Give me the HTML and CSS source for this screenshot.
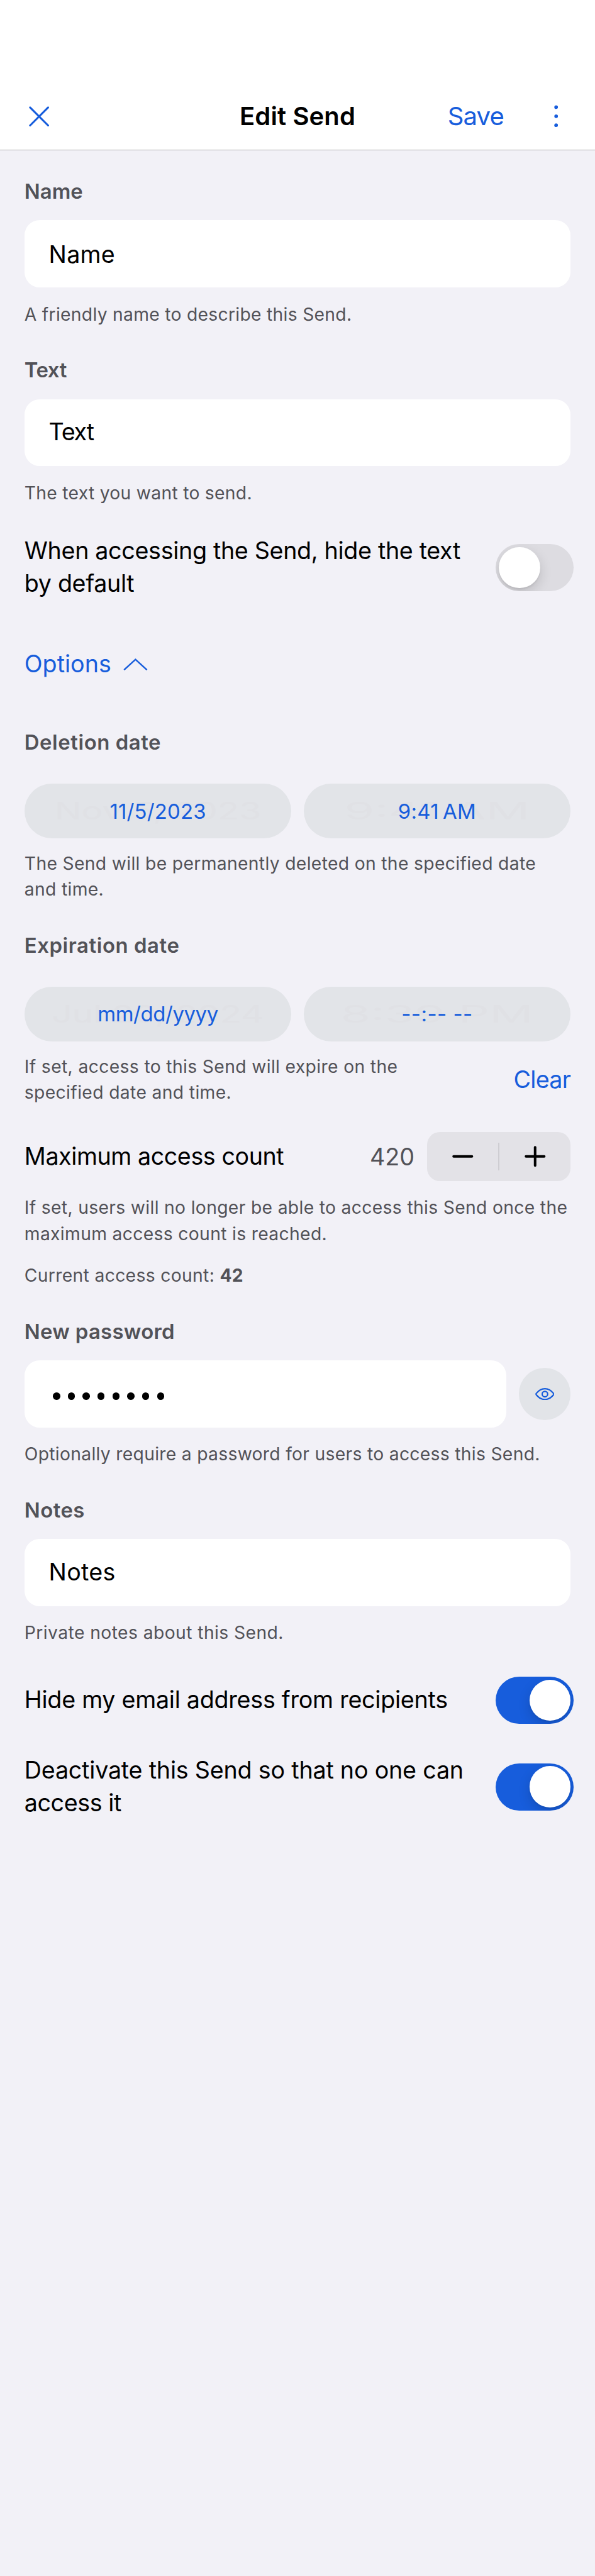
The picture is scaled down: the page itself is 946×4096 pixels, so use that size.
FILE: index.html
```html
<!DOCTYPE html>
<html lang="en">
<head>
<meta charset="utf-8">
<title>Edit Send</title>
<link rel="stylesheet" href="styles.css">
</head>
<body>
<header class="navbar">
  <svg class="icon-close" viewBox="0 0 40 40"><path d="M2.300 2.300 37.700 37.700M37.700 2.300 2.300 37.700"/></svg>
  <h1 class="title">Edit Send</h1>
  <div class="actions">
    <span class="save">Save</span>
    <svg class="icon-more" viewBox="0 0 8 44"><circle cx="4" cy="4.200" r="3.600"/><circle cx="4" cy="22" r="3.600"/><circle cx="4" cy="39.800" r="3.600"/></svg>
  </div>
</header>
<main class="form">
  <section class="group top">
    <h2 class="label l-name">Name</h2>
    <div class="field"><span class="t-name">Name</span></div>
    <p class="help h-name">A friendly name to describe this Send.</p>
  </section>
  <section class="group">
    <h2 class="label l-text">Text</h2>
    <div class="field area"><span class="t-text">Text</span></div>
    <p class="help h-name">The text you want to send.</p>
  </section>
  <section class="row first">
    <p class="body">When accessing the Send, hide the text<br>by default</p>
    <span class="switch"><i class="thumb"></i></span>
  </section>
  <div class="options">
    <span>Options</span>
    <svg class="icon-chevron" viewBox="0 0 48 24"><path d="M1.500 22.500 24 2 46.500 22.500"/></svg>
  </div>
  <section class="group">
    <h2 class="label">Deletion date</h2>
    <div class="pills">
      <div class="pill"><span class="ghost g-date">Nov 5, 2023</span><span class="p-date">11/5/2023</span></div>
      <div class="pill"><span class="ghost g-time">9:41 AM</span><span class="p-time">9:41 AM</span></div>
    </div>
    <p class="help">The Send will be permanently deleted on the specified date<br>and time.</p>
  </section>
  <section class="group">
    <h2 class="label">Expiration date</h2>
    <div class="pills">
      <div class="pill"><span class="ghost g-date">Jul 20, 2024</span><span class="p-mm">mm/dd/yyyy</span></div>
      <div class="pill"><span class="ghost g-time">8:39 PM</span><span class="p-dash">--:-- --</span></div>
    </div>
    <div class="split">
      <p class="help h-exp">If set, access to this Send will expire on the<br>specified date and time.</p>
      <span class="clear">Clear</span>
    </div>
  </section>
  <section class="row count">
    <p class="body b-max">Maximum access count</p>
    <span class="value">420</span>
    <div class="stepper">
      <svg class="icon-step" viewBox="0 0 44 44"><path d="M4 22H40"/></svg>
      <i class="divider"></i>
      <svg class="icon-step" viewBox="0 0 44 44"><path d="M4 22H40M22 4V40"/></svg>
    </div>
  </section>
  <p class="help h-max">If set, users will no longer be able to access this Send once the<br>maximum access count is reached.</p>
  <p class="help h-cur">Current access count: <b>42</b></p>
  <section class="group">
    <h2 class="label l-pass">New password</h2>
    <div class="secret">
      <div class="field"><span class="dots"><i></i><i></i><i></i><i></i><i></i><i></i><i></i><i></i></span></div>
      <span class="reveal"><svg class="icon-eye" viewBox="0 0 38 24"><path d="M2 10.700C6.500 5 12.500 1.400 19 1.400S31.500 5 36 10.700Q36.900 12 36 13.300C31.500 19 25.500 22.600 19 22.600S6.500 19 2 13.300Q1.100 12 2 10.700Z"/><circle cx="19" cy="12" r="5.400"/></svg></span>
    </div>
    <p class="help h-pass">Optionally require a password for users to access this Send.</p>
  </section>
  <section class="group">
    <h2 class="label l-notes">Notes</h2>
    <div class="field area"><span class="t-name">Notes</span></div>
    <p class="help h-notes">Private notes about this Send.</p>
  </section>
  <section class="row email">
    <p class="body b-email">Hide my email address from recipients</p>
    <span class="switch on"><i class="thumb"></i></span>
  </section>
  <section class="row off">
    <p class="body b-off">Deactivate this Send so that no one can<br><span class="b-max">access it</span></p>
    <span class="switch on"><i class="thumb"></i></span>
  </section>
</main>
</body>
</html>
```

FILE: styles.css
```css
/* 1rem equals 100 design units; every length below is in those units */
html { font-size: 80.855px; background: #f2f1f7; }
* { box-sizing: border-box; margin: 0; padding: 0; }
body { font-family: Inter, "Liberation Sans", sans-serif; font-size: .466rem; color: #000; min-height: 4096px; white-space: nowrap; }
svg { display: block; fill: none; flex: none; }

.navbar { height: 2.95rem; padding: 1.96rem .57rem 0; background: #fff; border-bottom: 1px solid #a9a9ac; display: grid; grid-template-columns: 1fr auto 1fr; align-items: start; }
.icon-close { width: .4rem; height: .4rem; margin-top: .127rem; stroke: #175ddc; stroke-width: 3.800; stroke-linecap: round; }
.title { font-size: .495rem; font-weight: 600; line-height: .66rem; letter-spacing: .0028em; }
.actions { display: flex; justify-content: flex-end; gap: .99rem; margin-right: .155rem; color: #175ddc; }
.save { font-size: .495rem; line-height: .66rem; letter-spacing: -.022em; }
.icon-more { width: .08rem; height: .44rem; margin-top: .105rem; fill: #175ddc; }

.form { padding: 0 .48rem; }
.group { padding-top: .54rem; }
.top { padding-top: .515rem; }
.label { font-size: .407rem; font-weight: 600; line-height: .6rem; letter-spacing: .017em; color: #525258; }
.l-name { letter-spacing: 0; }
.l-text { letter-spacing: -.013em; }
.l-pass { letter-spacing: .0086em; }
.l-notes { letter-spacing: .0136em; }
.field { height: 1.32rem; margin-top: .268rem; padding: .02rem 0 0 .48rem; background: #fff; border-radius: .3rem; display: flex; align-items: center; }
.area { padding: 0 0 .025rem .48rem; }
.t-name { letter-spacing: .0065em; }
.t-text { letter-spacing: -.033em; }
.help { margin-top: .278rem; font-size: .35rem; line-height: .51rem; letter-spacing: .0115em; color: #525258; }
.h-name { letter-spacing: .0098em; }
.h-exp { letter-spacing: .0125em; }
.h-pass { letter-spacing: .0103em; }
.h-notes { letter-spacing: .0146em; }
.body { line-height: .65rem; letter-spacing: -.0088em; }
.b-max { letter-spacing: -.0115em; }
.b-email { letter-spacing: -.0071em; }
.b-off { letter-spacing: -.0055em; }

.row { display: flex; align-items: center; justify-content: space-between; }
.first { margin-top: .555rem; }
.email { margin-top: .595rem; }
.off { margin-top: .59rem; }
.switch { width: 1.53rem; height: .93rem; margin-right: -.06rem; padding: .06rem; border-radius: .465rem; background: #dddce1; display: flex; flex: none; overflow: hidden; }
.on { background: #175ddc; justify-content: flex-end; }
.thumb { width: .81rem; height: .81rem; border-radius: 50%; background: #fff; box-shadow: 0 .09rem .24rem rgba(0,0,0,.15), 0 .03rem .03rem rgba(0,0,0,.06); }

.options { margin-top: .93rem; margin-bottom: .37rem; display: flex; align-items: center; gap: .235rem; color: #175ddc; line-height: .65rem; }
.icon-chevron { width: .48rem; height: .24rem; stroke: #175ddc; stroke-width: 3; }

.pills { margin-top: .508rem; display: grid; grid-template-columns: 1fr 1fr; gap: .24rem; }
.pills + .help, .split .help { margin-top: .245rem; }
.pill { height: 1.08rem; border-radius: .54rem; background: #e2e4e8; display: grid; place-items: center; color: #175ddc; font-size: .407rem; }
.pill > span { grid-area: 1 / 1; z-index: 1; }
.pill > .ghost { font-size: .466rem; color: #e0e1e5; z-index: 0; }
.g-date { transform: scaleX(1.505); }
.g-time { transform: scaleX(2.050); }
.p-date { letter-spacing: .0057em; }
.p-time { letter-spacing: .01em; word-spacing: -.11em; }
.p-mm { letter-spacing: -.0124em; }
.p-dash { letter-spacing: .015em; }
.split { display: flex; justify-content: space-between; align-items: center; }
.clear { color: #175ddc; margin-top: .23rem; letter-spacing: -.0188em; }

.count { margin-top: .52rem; }
.value { margin-left: auto; margin-right: .25rem; color: #525258; }
.stepper { width: 2.82rem; height: .96rem; border-radius: .25rem; background: #e3e2e7; display: flex; align-items: center; justify-content: space-between; padding: 0 .48rem; }
.icon-step { width: .44rem; height: .44rem; stroke: #000; stroke-width: 5; stroke-linecap: round; }
.divider { width: .03rem; height: .54rem; background: #cecdd2; }
.h-cur { margin-top: .31rem; }

.secret { display: flex; align-items: center; gap: .24rem; margin-top: .268rem; }
.secret .field { flex: 1; margin: 0; }
.dots { display: flex; gap: .15rem; padding: .07rem 0 0 .08rem; }
.dots i { width: .1426rem; height: .1426rem; border-radius: 50%; background: #000; }
.reveal { width: 1.02rem; height: 1.02rem; border-radius: 50%; background: #e2e4e8; display: grid; place-items: center; }
.icon-eye { width: .38rem; height: .24rem; stroke: #175ddc; stroke-width: 2.700; }
```
